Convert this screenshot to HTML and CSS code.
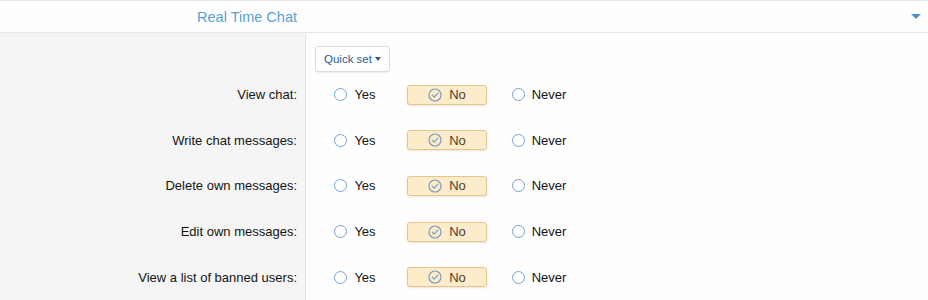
FILE: index.html
```html
<!DOCTYPE html>
<html lang="en">
<head>
  <meta charset="UTF-8">
  <title>Real Time Chat permissions</title>
  <link rel="stylesheet" href="styles.css">
</head>
<body>
  <div class="block-header">
    <div class="block-title">Real Time Chat</div>
    <span class="collapse-caret"></span>
  </div>

  <div class="perm-list">
    <div class="perm-row quick-row">
      <div class="perm-label"></div>
      <div class="perm-value">
        <button class="quick-set">Quick set <span class="caret"></span></button>
      </div>
    </div>

    <div class="perm-row">
      <div class="perm-label">View chat:</div>
      <div class="perm-value">
        <label class="choice"><span class="radio"></span>Yes</label>
        <label class="choice selected"><svg class="check" viewBox="0 0 14 14"><circle cx="7" cy="7" r="6" /><path d="M4.2 7.2l2 2 3.6-4" /></svg>No</label>
        <label class="choice"><span class="radio"></span>Never</label>
      </div>
    </div>

    <div class="perm-row">
      <div class="perm-label">Write chat messages:</div>
      <div class="perm-value">
        <label class="choice"><span class="radio"></span>Yes</label>
        <label class="choice selected"><svg class="check" viewBox="0 0 14 14"><circle cx="7" cy="7" r="6" /><path d="M4.2 7.2l2 2 3.6-4" /></svg>No</label>
        <label class="choice"><span class="radio"></span>Never</label>
      </div>
    </div>

    <div class="perm-row">
      <div class="perm-label">Delete own messages:</div>
      <div class="perm-value">
        <label class="choice"><span class="radio"></span>Yes</label>
        <label class="choice selected"><svg class="check" viewBox="0 0 14 14"><circle cx="7" cy="7" r="6" /><path d="M4.2 7.2l2 2 3.6-4" /></svg>No</label>
        <label class="choice"><span class="radio"></span>Never</label>
      </div>
    </div>

    <div class="perm-row">
      <div class="perm-label">Edit own messages:</div>
      <div class="perm-value">
        <label class="choice"><span class="radio"></span>Yes</label>
        <label class="choice selected"><svg class="check" viewBox="0 0 14 14"><circle cx="7" cy="7" r="6" /><path d="M4.2 7.2l2 2 3.6-4" /></svg>No</label>
        <label class="choice"><span class="radio"></span>Never</label>
      </div>
    </div>

    <div class="perm-row">
      <div class="perm-label">View a list of banned users:</div>
      <div class="perm-value">
        <label class="choice"><span class="radio"></span>Yes</label>
        <label class="choice selected"><svg class="check" viewBox="0 0 14 14"><circle cx="7" cy="7" r="6" /><path d="M4.2 7.2l2 2 3.6-4" /></svg>No</label>
        <label class="choice"><span class="radio"></span>Never</label>
      </div>
    </div>
  </div>
</body>
</html>
```

FILE: styles.css
```css
body {
  margin: 0;
  font-family: 'Liberation Sans', Arial, sans-serif;
  font-size: 13px;
  color: #141414;
  background: #fefefe;
}
.block-header {
  display: flex;
  align-items: center;
  height: 31px;
  border-top: 1px solid #e2e2e2;
  border-bottom: 1px solid #e6e6e6;
  background: #fefefe;
}
.block-title {
  width: 297px;
  text-align: right;
  font-size: 14.5px;
  color: #5a9fd4;
}
.collapse-caret {
  margin-left: auto;
  margin-right: 7px;
  width: 0;
  height: 0;
  border-left: 5px solid transparent;
  border-right: 5px solid transparent;
  border-top: 5px solid #4d8fd0;
}
.perm-row {
  display: flex;
}
.perm-label {
  width: 297px;
  padding-right: 8px;
  background: #f5f5f5;
  border-right: 1px solid #e4e4e4;
  display: flex;
  align-items: center;
  justify-content: flex-end;
}
.perm-value {
  display: flex;
  align-items: center;
  gap: 12px;
  padding: 12.8px 0 12.8px 9px;
}
.quick-row .perm-value {
  padding: 13px 0 0 9px;
}
.quick-set {
  height: 26px;
  padding: 0 8px;
  font-family: inherit;
  font-size: 11.5px;
  color: #2b5c8d;
  background: #fff;
  border: 1px solid #dcdcdc;
  border-radius: 3px;
  box-shadow: 0 1px 1px rgba(0, 0, 0, 0.06);
  display: flex;
  align-items: center;
  gap: 3px;
}
.caret {
  width: 0;
  height: 0;
  border-left: 3.5px solid transparent;
  border-right: 3.5px solid transparent;
  border-top: 4px solid #2b5c8d;
}
.choice {
  width: 80px;
  height: 20px;
  box-sizing: border-box;
  display: flex;
  align-items: center;
  justify-content: center;
  gap: 7px;
}
.choice.selected {
  background: #fcecc9;
  border: 1px solid #e5c58e;
  border-radius: 3px;
  box-shadow: 0 1px 2px rgba(160, 120, 50, 0.2);
  color: #4a4232;
}
.radio {
  width: 13px;
  height: 13px;
  box-sizing: border-box;
  border: 1.5px solid #6fa3d6;
  border-radius: 50%;
  background: #fff;
}
.check {
  width: 14px;
  height: 14px;
  fill: none;
  stroke: #7a9cc6;
  stroke-width: 1.2;
  stroke-linecap: round;
  stroke-linejoin: round;
}
```
